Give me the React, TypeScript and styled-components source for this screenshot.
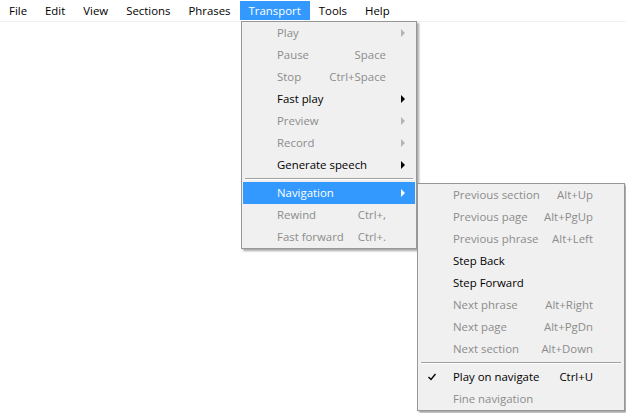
import React from 'react';
import styled, { createGlobalStyle } from 'styled-components';

const GlobalStyle = createGlobalStyle`
    body {
        margin: 0;
        background: #ffffff;
        font-family: 'Open Sans', 'Noto Sans', sans-serif;
        font-size: 11.4px;
    }
`;

const Page = styled.div`
    position: relative;
    width: 626px;
    height: 413px;
    overflow: hidden;
    background: #ffffff;
`;

const MenuBar = styled.div`
    display: flex;
    height: 21px;
    padding-left: 0;
    border-bottom: 1px solid #f0f0f0;
    background: #ffffff;
`;

interface BarItemProps {
    active?: boolean;
}

const BarItem = styled.div<BarItemProps>`
    display: flex;
    align-items: center;
    height: 19px;
    margin-top: 1px;
    padding: 0 9px 1px;
    box-sizing: border-box;
    color: ${({ active }) => (active ? '#ffffff' : '#000000')};
    background: ${({ active }) => (active ? '#3399ff' : 'transparent')};
    &:first-child {
        padding-left: 9px;
    }
`;

interface PopupProps {
    left: number;
    top: number;
    width: number;
}

const Popup = styled.div<PopupProps>`
    position: absolute;
    left: ${({ left }) => left}px;
    top: ${({ top }) => top}px;
    width: ${({ width }) => width}px;
    box-sizing: border-box;
    padding: 0 1px;
    background: #f0f0f0;
    border: 1px solid #979797;
    box-shadow: 2px 2px 2px rgba(0, 0, 0, 0.35);
    display: flex;
    flex-direction: column;
`;

interface ItemProps {
    disabled?: boolean;
    selected?: boolean;
    right: number;
}

const Item = styled.div<ItemProps>`
    display: grid;
    grid-template-columns: 34px 1fr auto ${({ right }) => right}px;
    align-items: center;
    height: 22px;
    padding-bottom: 1px;
    box-sizing: border-box;
    color: ${({ disabled, selected }) => (selected ? '#ffffff' : disabled ? '#8c8c8c' : '#000000')};
    background: ${({ selected }) => (selected ? '#3399ff' : 'transparent')};
`;

const Check = styled.div`
    display: flex;
    justify-content: center;
    padding-right: 8px;
    padding-top: 1px;
`;

const Label = styled.span`
    white-space: nowrap;
`;

const Shortcut = styled.span`
    white-space: nowrap;
    text-align: right;
`;

const ArrowCell = styled.div`
    display: flex;
    justify-content: center;
    padding-left: 4px;
    padding-top: 1px;
`;

interface ArrowProps {
    tone: string;
}

const Arrow = styled.div<ArrowProps>`
    width: 0;
    height: 0;
    border-top: 4px solid transparent;
    border-bottom: 4px solid transparent;
    border-left: 4px solid ${({ tone }) => tone};
`;

const Separator = styled.div`
    height: 6px;
    display: flex;
    align-items: center;
    padding: 0 2px;
    &::after {
        content: '';
        flex: 1;
        border-top: 1px solid #a0a0a0;
        border-bottom: 1px solid #ffffff;
    }
`;

type Entry =
    | { sep: true }
    | { sep?: false; label: string; key?: string; disabled?: boolean; sub?: boolean; selected?: boolean; checked?: boolean };

const transport: Entry[] = [
    { label: 'Play', disabled: true, sub: true },
    { label: 'Pause', key: 'Space', disabled: true },
    { label: 'Stop', key: 'Ctrl+Space', disabled: true },
    { label: 'Fast play', sub: true },
    { label: 'Preview', disabled: true, sub: true },
    { label: 'Record', disabled: true, sub: true },
    { label: 'Generate speech', sub: true },
    { sep: true },
    { label: 'Navigation', sub: true, selected: true },
    { label: 'Rewind', key: 'Ctrl+,', disabled: true },
    { label: 'Fast forward', key: 'Ctrl+.', disabled: true },
];

const navigation: Entry[] = [
    { label: 'Previous section', key: 'Alt+Up', disabled: true },
    { label: 'Previous page', key: 'Alt+PgUp', disabled: true },
    { label: 'Previous phrase', key: 'Alt+Left', disabled: true },
    { label: 'Step Back' },
    { label: 'Step Forward' },
    { label: 'Next phrase', key: 'Alt+Right', disabled: true },
    { label: 'Next page', key: 'Alt+PgDn', disabled: true },
    { label: 'Next section', key: 'Alt+Down', disabled: true },
    { sep: true },
    { label: 'Play on navigate', key: 'Ctrl+U', checked: true },
    { label: 'Fine navigation', disabled: true },
];

const CheckMark = () => (
    <svg width="8" height="8" viewBox="0 0 8 8">
        <path d="M0.5 4 L3 6.5 L7.5 1" fill="none" stroke="#000" strokeWidth="1.4" />
    </svg>
);

const MenuList = ({ entries, right }: { entries: Entry[]; right: number }) => (
    <>
        {entries.map((e, i) => {
            if (e.sep) return <Separator key={i} />;
            const tone = e.selected ? '#ffffff' : e.disabled ? '#b4b4b4' : '#000000';
            return (
                <Item key={i} disabled={e.disabled} selected={e.selected} right={right}>
                    <Check>{e.checked ? <CheckMark /> : null}</Check>
                    <Label>{e.label}</Label>
                    <Shortcut>{e.key}</Shortcut>
                    <ArrowCell>{e.sub ? <Arrow tone={tone} /> : null}</ArrowCell>
                </Item>
            );
        })}
    </>
);

const menus = ['File', 'Edit', 'View', 'Sections', 'Phrases', 'Transport', 'Tools', 'Help'];

export default function App() {
    return (
        <Page>
            <GlobalStyle />
            <MenuBar>
                {menus.map((m) => (
                    <BarItem key={m} active={m === 'Transport'}>{m}</BarItem>
                ))}
            </MenuBar>
            <Popup left={241} top={21} width={176}>
                <MenuList entries={transport} right={29} />
            </Popup>
            <Popup left={417} top={183} width={208}>
                <MenuList entries={navigation} right={30} />
            </Popup>
        </Page>
    );
}
